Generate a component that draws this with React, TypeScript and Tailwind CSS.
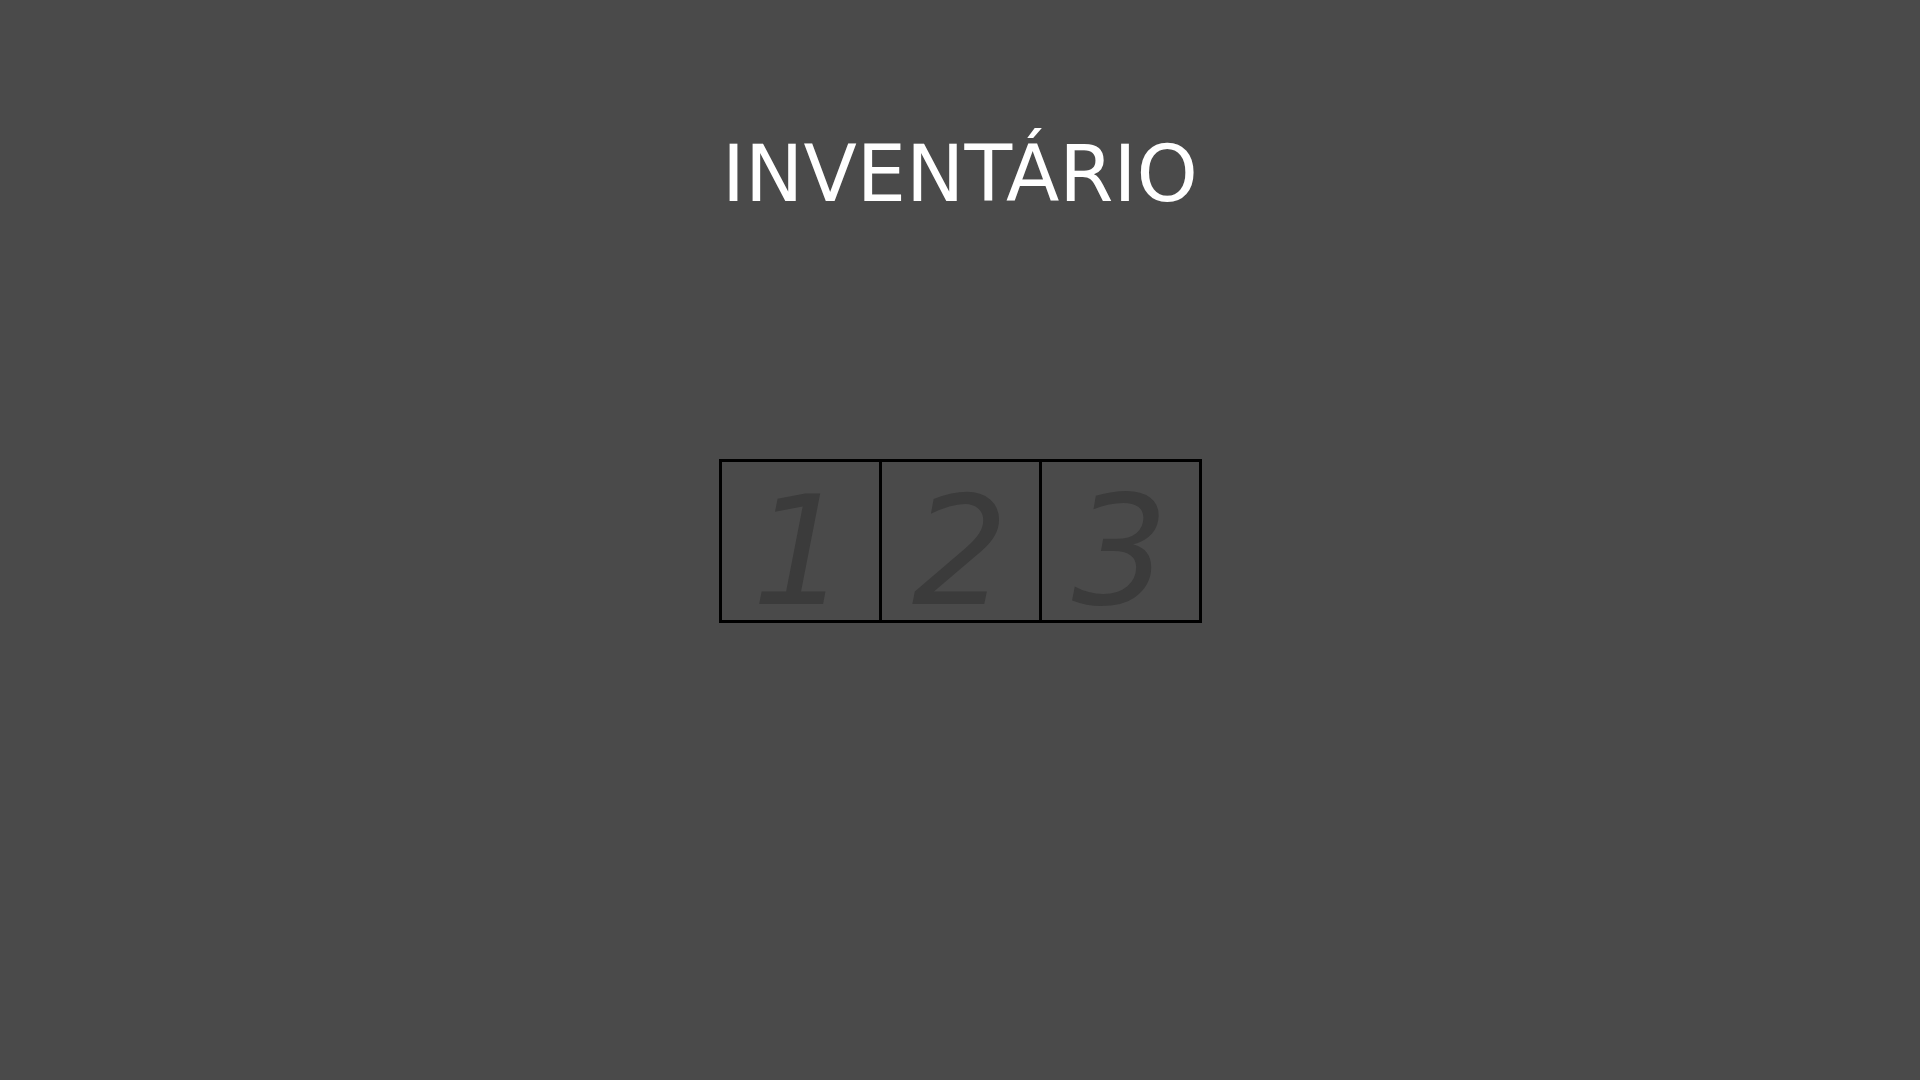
import React from 'react';

const slots = ['1', '2', '3'];

const App: React.FC = () => {
  return (
    <div className="w-full h-screen bg-[#4a4a4a] flex flex-col items-center font-['DejaVu_Sans',sans-serif]">
      {/* Title */}
      <h1 className="mt-[135px] text-[78px] leading-none text-white font-normal">INVENTÁRIO</h1>

      {/* Slots */}
      <div className="mt-[246px] flex">
        {slots.map((n, i) => (
          <div
            key={n}
            className={`w-[163px] h-[164px] border-[3px] border-black flex justify-center pt-[14px] ${i > 0 ? '-ml-[3px]' : ''}`}
          >
            <span className="text-[152px] leading-none italic text-[#3b3b3b]">{n}</span>
          </div>
        ))}
      </div>
    </div>
  );
};

export default App;
